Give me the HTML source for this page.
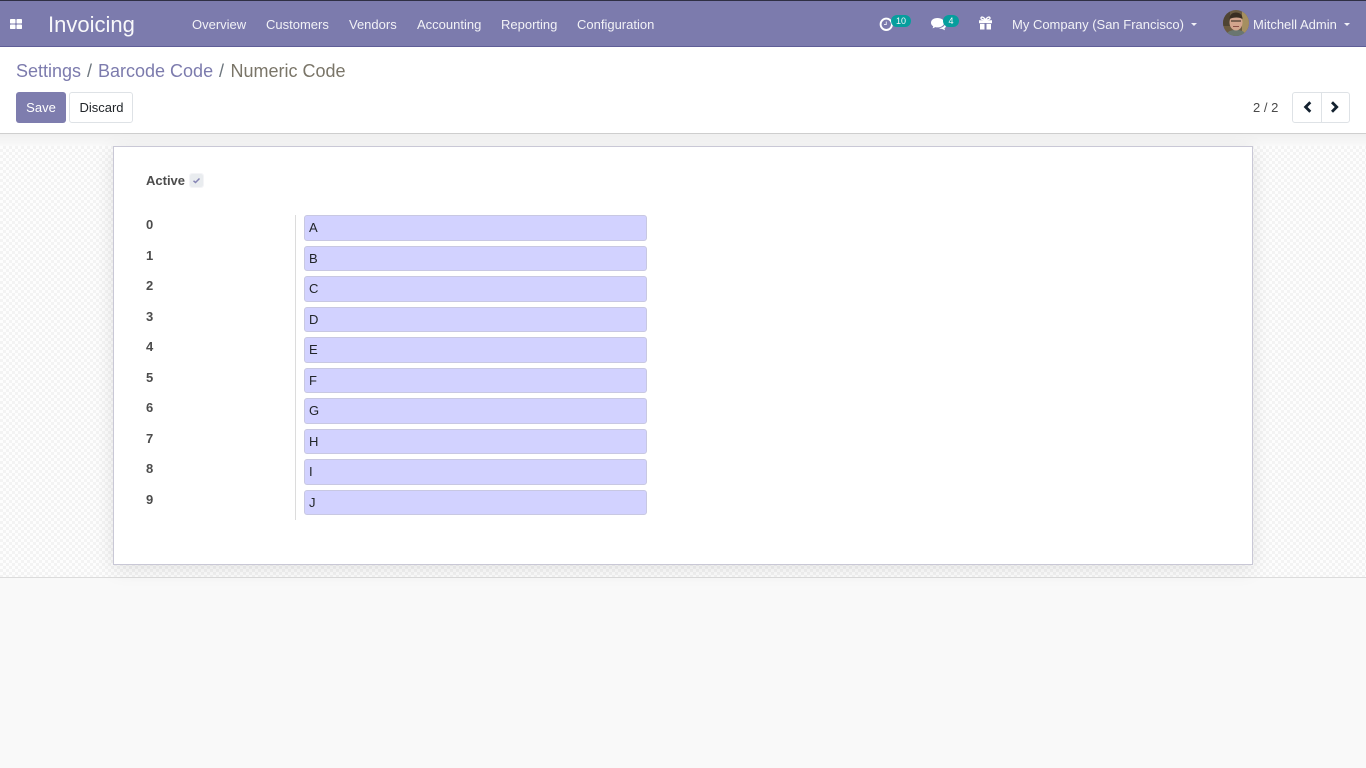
<!DOCTYPE html>
<html lang="en">
<head>
<meta charset="utf-8">
<title>Invoicing</title>
<style>
*{box-sizing:border-box}
html,body{margin:0;padding:0;width:1366px;height:768px;overflow:hidden;background:#f9f9f9;font-family:"Liberation Sans",sans-serif;font-size:13px;color:#212529}
.t{position:absolute;white-space:nowrap;line-height:16px}
#nav{position:absolute;left:0;top:0;width:1366px;height:47px;background:#7c7bad;border-top:1px solid #2f2f44;border-bottom:1px solid #5f5e97}
.n{position:absolute;top:17px;line-height:16px;color:#fff;opacity:.9;font-size:13px;white-space:nowrap}
.caret{position:absolute;width:0;height:0;border-left:3.5px solid transparent;border-right:3.5px solid transparent;border-top:3.5px solid #fff;opacity:.9}
.badge{position:absolute;background:#00a09d;color:#fff;border-radius:7px;font-size:9px;line-height:12px;height:12px;text-align:center;opacity:.95}
#cp{position:absolute;left:0;top:47px;width:1366px;height:87px;background:#fff;border-bottom:1px solid #cfcfcf}
.bc{position:absolute;top:14px;font-size:18px;line-height:21px;white-space:nowrap}
#content{position:absolute;left:0;top:134px;width:1366px;height:444px;border-bottom:1px solid #dcdcdc;background-color:#fdfdfd;background-image:conic-gradient(#f3f3f3 25%,#fdfdfd 0 50%,#f3f3f3 0 75%,#fdfdfd 0);background-size:6px 6px}
#fade{position:absolute;left:0;top:0;width:1366px;height:12px;background:linear-gradient(#f0f0f0,#f9f9f9)}
#sheet{position:absolute;left:113px;top:146px;width:1140px;height:419px;background:#fff;border:1px solid #c9c8d6;box-shadow:0 4px 18px rgba(0,0,0,.1)}
.lab{position:absolute;left:146px;font-weight:bold;color:#4c4c4c;font-size:13px;line-height:16px}
.inp{position:absolute;left:304px;width:343px;height:26px;background:#d2d2ff;border:1px solid #c8c8e2;border-radius:3px;padding-left:4px;line-height:24px;font-size:13px;color:#212529}
</style>
</head>
<body>
<div id="nav"></div>
<svg style="position:absolute;left:10px;top:19px" width="13" height="11" viewBox="0 0 13 11"><rect x="0" y="0" width="5.5" height="4.500" rx=".8" fill="#fff"/><rect x="6.500" y="0" width="5.500" height="4.500" rx=".8" fill="#fff"/><rect x="0" y="5.500" width="5.500" height="4.500" rx=".8" fill="#fff"/><rect x="6.500" y="5.500" width="5.500" height="4.500" rx=".8" fill="#fff"/></svg>
<div class="t" style="left:48px;top:12px;font-size:22px;line-height:26px;color:#fff;opacity:.95">Invoicing</div>
<div class="n" style="left:192px">Overview</div>
<div class="n" style="left:266px">Customers</div>
<div class="n" style="left:349px">Vendors</div>
<div class="n" style="left:417px">Accounting</div>
<div class="n" style="left:501px">Reporting</div>
<div class="n" style="left:577px">Configuration</div>

<svg style="position:absolute;left:879px;top:17px" width="15" height="15" viewBox="0 0 15 15"><circle cx="7.300" cy="7.300" r="5.700" fill="none" stroke="#fff" stroke-width="1.900"/><path d="M7.300 4.500V7.500H5" fill="none" stroke="#fff" stroke-width="1" opacity=".8"/></svg>
<div class="badge" style="left:891px;top:15px;width:20px">10</div>
<svg style="position:absolute;left:930px;top:16px" width="18" height="16" viewBox="0 0 18 16"><path d="M7.500 2C3.600 2 1 4 1 6.800c0 1.500.9 2.700 2.200 3.500L2.600 12.400l2.800-1.300c.7.200 1.400.300 2.100.300 3.600 0 6.700-2 6.700-4.800S11.100 2 7.500 2z" fill="#fff"/><path d="M14.800 8.500c-.7 2-2.900 3.400-5.600 3.700.8.500 1.800.7 2.800.7l3 1.300-.6-1.900c1-.6 1.500-1.400 1.500-2.300 0-.5-.3-1-1.100-1.500z" fill="#fff"/></svg>
<div class="badge" style="left:943px;top:15px;width:16px">4</div>
<svg style="position:absolute;left:978px;top:16px" width="15" height="14" viewBox="0 0 15 14"><path d="M1 4.200h13v3H1zM2 8h11v5.500H2z" fill="#fff"/><rect x="6.500" y="7" width="2" height="6.500" fill="#7c7bad"/><path d="M7.500 4C6 1 3.600.4 3 1.800 2.500 3.200 5 4 7.500 4zM7.500 4C9 1 11.400.4 12 1.800 12.500 3.200 10 4 7.500 4z" fill="none" stroke="#fff" stroke-width="1.300"/></svg>
<div class="n" style="left:1012px">My Company (San Francisco)</div>
<div class="caret" style="left:1191px;top:23px"></div>
<svg style="position:absolute;left:1223px;top:10px" width="26" height="26" viewBox="0 0 26 26"><defs><clipPath id="c"><circle cx="13" cy="13" r="13"/></clipPath></defs><g clip-path="url(#c)"><rect width="26" height="26" fill="#6b5a40"/><rect x="19" width="7" height="26" fill="#a58f60"/><rect y="0" width="7" height="16" fill="#4f4434"/><path d="M3 26c1-5 5-6 10-6s9 1 10 6z" fill="#6a7670"/><ellipse cx="13" cy="12.500" rx="6.500" ry="8" fill="#d3a48d"/><path d="M6.500 9c0-5 3.500-6.500 6.500-6.500s6.500 1.500 6.500 6.500c-3-2-9-2-13 0z" fill="#3a2e22"/><path d="M8 11h10" stroke="#4a3a30" stroke-width="1.200"/><path d="M10 16.500h6" stroke="#8a4e45" stroke-width="1"/></g></svg>
<div class="n" style="left:1253px">Mitchell Admin</div>
<div class="caret" style="left:1344px;top:23px"></div>

<div id="cp">
<div class="bc" style="left:16px;color:#7c7bad">Settings</div>
<div class="bc" style="left:87px;color:#6c757d">/</div>
<div class="bc" style="left:98px;color:#7c7bad">Barcode Code</div>
<div class="bc" style="left:219px;color:#6c757d">/</div>
<div class="bc" style="left:230.500px;color:#7a7568">Numeric Code</div>
<div style="position:absolute;left:16px;top:45px;width:50px;height:31px;background:#7c7bad;border-radius:3px;color:#fff;opacity:.98;text-align:center;line-height:31px">Save</div>
<div style="position:absolute;left:69px;top:45px;width:64px;height:31px;background:#fff;border:1px solid #dee2e6;border-radius:3px;color:#212529;text-align:center;line-height:29px;padding-left:1px">Discard</div>
<div class="t" style="left:1253px;top:53px;color:#4a4a4a">2 / 2</div>
<div style="position:absolute;left:1292px;top:45px;width:58px;height:31px;background:#fff;border:1px solid #dee2e6;border-radius:3px"></div>
<div style="position:absolute;left:1321px;top:45px;width:1px;height:31px;background:#dee2e6"></div>
<svg style="position:absolute;left:1302px;top:54px" width="10" height="12" viewBox="0 0 10 12"><path d="M8.300 1.300L3.600 6l4.700 4.700" fill="none" stroke="#13212f" stroke-width="2.800"/></svg>
<svg style="position:absolute;left:1330px;top:54px" width="10" height="12" viewBox="0 0 10 12"><path d="M2 1.300L6.700 6 2 10.700" fill="none" stroke="#13212f" stroke-width="2.800"/></svg>
</div>

<div id="content"><div id="fade"></div></div>
<div id="sheet"></div>

<div class="lab" style="top:173px">Active</div>
<div style="position:absolute;left:190px;top:174px;width:13px;height:13px;background:#e9ecef;border-radius:2px;outline:1px solid #f4f4f7"></div>
<svg style="position:absolute;left:192px;top:176px" width="9" height="9" viewBox="0 0 9 9"><path d="M1.500 4.800L3.500 6.500 7.500 2.500" fill="none" stroke="#8685b5" stroke-width="1.500"/></svg>

<div style="position:absolute;left:295px;top:215px;width:1px;height:305px;background:#dcdcdc"></div>

<div class="lab" style="top:217px">0</div><div class="inp" style="top:215px">A</div>
<div class="lab" style="top:248px">1</div><div class="inp" style="top:246px;height:25px">B</div>
<div class="lab" style="top:278px">2</div><div class="inp" style="top:276px">C</div>
<div class="lab" style="top:309px">3</div><div class="inp" style="top:307px;height:25px">D</div>
<div class="lab" style="top:339px">4</div><div class="inp" style="top:337px">E</div>
<div class="lab" style="top:370px">5</div><div class="inp" style="top:368px;height:25px">F</div>
<div class="lab" style="top:400px">6</div><div class="inp" style="top:398px">G</div>
<div class="lab" style="top:431px">7</div><div class="inp" style="top:429px;height:25px">H</div>
<div class="lab" style="top:461px">8</div><div class="inp" style="top:459px">I</div>
<div class="lab" style="top:492px">9</div><div class="inp" style="top:490px;height:25px">J</div>
</body>
</html>
